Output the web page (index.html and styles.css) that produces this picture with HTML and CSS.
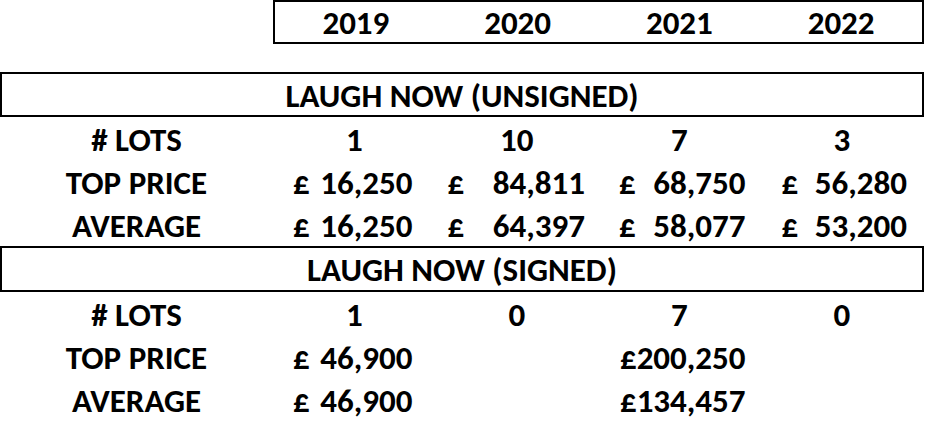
FILE: index.html
```html
<!DOCTYPE html>
<html lang="en">
<head>
<meta charset="utf-8">
<title>Laugh Now</title>
<link rel="stylesheet" href="styles.css">
</head>
<body>
<div class="sheet">
  <div class="years">
    <div class="year">2019</div>
    <div class="year">2020</div>
    <div class="year">2021</div>
    <div class="year">2022</div>
  </div>
  <div class="spacer"></div>

  <div class="title title-1">LAUGH NOW (UNSIGNED)</div>
  <div class="row">
    <div class="label">#&nbsp;LOTS</div>
    <div class="num c1">1</div>
    <div class="num c2">10</div>
    <div class="num c3">7</div>
    <div class="num c4">3</div>
  </div>
  <div class="row">
    <div class="label">TOP PRICE</div>
    <div class="money c1"><span>£</span><span>16,250</span></div>
    <div class="money c2"><span>£</span><span>84,811</span></div>
    <div class="money c3"><span>£</span><span>68,750</span></div>
    <div class="money c4"><span>£</span><span>56,280</span></div>
  </div>
  <div class="row">
    <div class="label">AVERAGE</div>
    <div class="money c1"><span>£</span><span>16,250</span></div>
    <div class="money c2"><span>£</span><span>64,397</span></div>
    <div class="money c3"><span>£</span><span>58,077</span></div>
    <div class="money c4"><span>£</span><span>53,200</span></div>
  </div>

  <div class="title title-2">LAUGH NOW (SIGNED)</div>
  <div class="row">
    <div class="label">#&nbsp;LOTS</div>
    <div class="num c1">1</div>
    <div class="num c2">0</div>
    <div class="num c3">7</div>
    <div class="num c4">0</div>
  </div>
  <div class="row">
    <div class="label">TOP PRICE</div>
    <div class="money c1"><span>£</span><span>46,900</span></div>
    <div class="money c2"></div>
    <div class="money c3 tight"><span>£</span><span>200,250</span></div>
    <div class="money c4"></div>
  </div>
  <div class="row">
    <div class="label">AVERAGE</div>
    <div class="money c1"><span>£</span><span>46,900</span></div>
    <div class="money c2"></div>
    <div class="money c3 tight"><span>£</span><span>134,457</span></div>
    <div class="money c4"></div>
  </div>
</div>
</body>
</html>
```

FILE: styles.css
```css
html, body {
  margin: 0;
  padding: 0;
  background: #ffffff;
}

body {
  font-family: Carlito, "Lato", "Open Sans", sans-serif;
  font-weight: bold;
  font-size: 33px;
  color: #000000;
}

.sheet {
  width: 925px;
  display: flex;
  flex-direction: column;
}

.years {
  margin-left: 273px;
  width: 651px;
  height: 44px;
  box-sizing: border-box;
  border: 2px solid #000;
  display: grid;
  grid-template-columns: repeat(4, 1fr);
  align-items: center;
  padding-top: 2px;
}

.year {
  text-align: center;
  line-height: 1;
}

.spacer {
  height: 28px;
}

.title {
  width: 924px;
  box-sizing: border-box;
  border: 2px solid #000;
  display: flex;
  align-items: center;
  justify-content: center;
  line-height: 1;
  padding-top: 3px;
}

.title-1 {
  height: 45px;
}

.title-2 {
  height: 46px;
}

.row {
  height: 43px;
  display: grid;
  grid-template-columns: 273px repeat(4, 162.5px);
  align-items: center;
  line-height: 1;
  padding-top: 4px;
  box-sizing: border-box;
}

.label {
  text-align: center;
}

.num {
  text-align: center;
}

.money {
  display: flex;
  justify-content: space-between;
}

.money.c1 { padding: 0 23px 0 20px; }
.money.c2 { padding: 0 13px 0 12px; }
.money.c3 { padding: 0 15px 0 21px; }
.money.c4 { padding: 0 16px 0 21px; }
.money.tight { justify-content: flex-end; }
```
